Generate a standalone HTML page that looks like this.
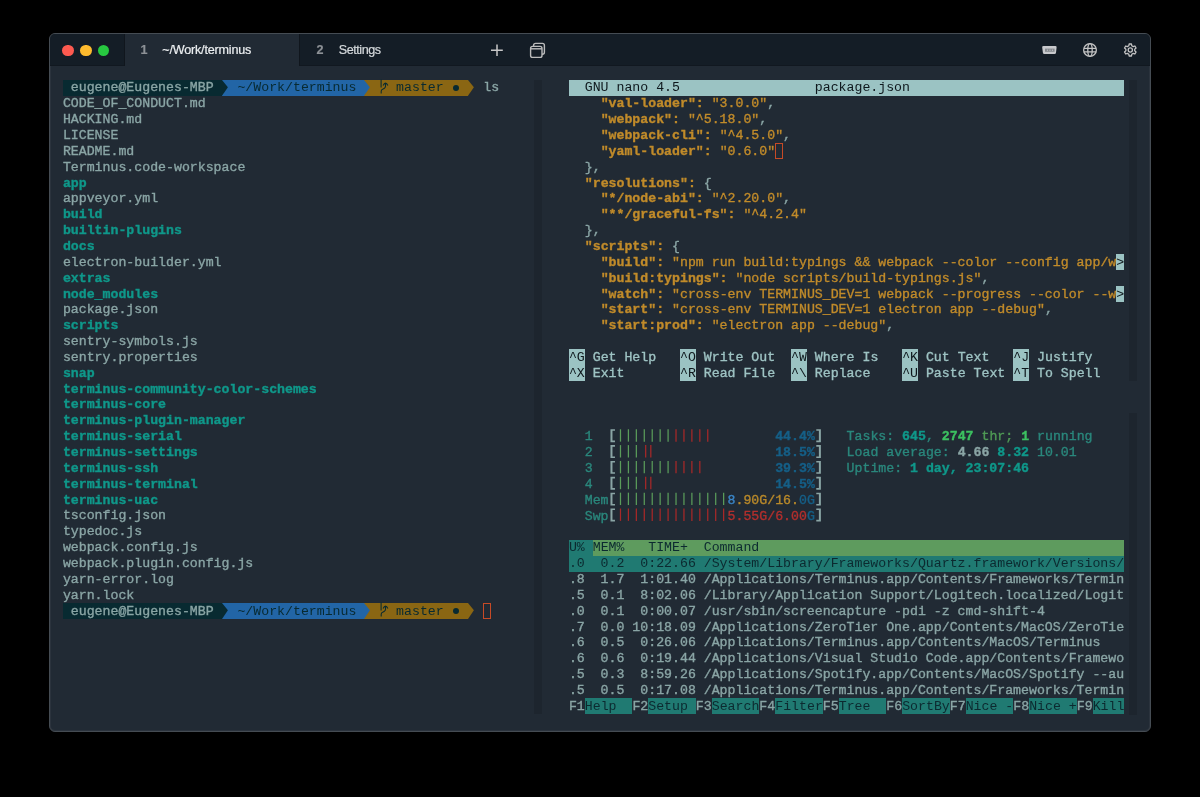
<!DOCTYPE html>
<html><head><meta charset="utf-8">
<style>
html,body{margin:0;padding:0;background:#000;width:1200px;height:797px;overflow:hidden;position:relative}
#all{position:absolute;left:0;top:0;width:1200px;height:797px;will-change:transform}
#win{position:absolute;left:49px;top:33px;width:1102px;height:699px;box-sizing:border-box;border:1px solid #454c53;border-radius:6px;background:#212a34;box-shadow:inset 1px 0 0 #2b333d,inset -1px 0 0 #2b333d,inset 0 -1px 0 #2b333d;overflow:hidden}
#tabbar{position:absolute;left:0;top:0;right:0;height:32.3px;background:#141d26;box-shadow:inset 0 -1px 0 #111820}
#tab1{position:absolute;left:74.7px;top:0;width:174.7px;height:32.5px;background:#212a34}
.tl{position:absolute;top:10.9px;width:11.6px;height:11.6px;border-radius:50%}
.tabt{position:absolute;font-family:"Liberation Sans",sans-serif;font-size:12.6px;line-height:16px;white-space:pre;letter-spacing:-0.45px;-webkit-text-stroke:0.2px currentColor}
.sb{position:absolute;width:7.6px;background:#1d252e}
.b{position:absolute;height:15.85px}
.r{position:absolute;-webkit-text-stroke:0.35px currentColor;height:15.85px;line-height:15.85px;font-family:"Liberation Mono",monospace;font-size:13.225px;white-space:pre}
.arr{position:absolute;width:6.9px;height:15.85px;clip-path:polygon(0 0,1px 0,100% 46%,1px 100%,0 100%)}
.dot{position:absolute;width:6.2px;height:6.2px;border-radius:50%}
.ic{position:absolute;overflow:visible}
.cur{position:absolute;width:7.935px;height:15.85px;box-sizing:border-box;border:1.3px solid #c64a26}
.bar{position:absolute;width:1.2px;height:12.4px}
</style></head><body><div id="all">
<div id="win">
  <div id="tabbar"></div>
  <div id="tab1"></div><div style="position:absolute;left:249.4px;top:0;width:1px;height:32.3px;background:#10161d"></div><div style="position:absolute;left:73.7px;top:0;width:1px;height:32.3px;background:#10161d"></div>
  <div class="tl" style="left:12.3px;background:#fd5a50"></div>
  <div class="tl" style="left:30.1px;background:#febb2e"></div>
  <div class="tl" style="left:47.8px;background:#27c840"></div>
</div>
<div class="tabt" style="left:140.5px;top:42px;color:#8d9196;font-weight:bold">1</div>
<div class="tabt" style="left:162.3px;top:42px;color:#eceff1;letter-spacing:-0.2px">~/Work/terminus</div>
<div class="tabt" style="left:316.5px;top:42px;color:#8d9196;font-weight:bold">2</div>
<div class="tabt" style="left:338.7px;top:42px;color:#d5d9dc">Settings</div>
<svg class="ic" style="left:0;top:0" width="1200" height="70">
  <path d="M491 50.2H502.8M497 44.6V56" stroke="#c8c8c8" stroke-width="1.5" fill="none"/>
  <rect x="533.6" y="43.4" width="10.8" height="10.8" rx="2" stroke="#bcbcbc" stroke-width="1.4" fill="#141d26"/>
  <rect x="530.6" y="46.4" width="11.4" height="11" rx="2" stroke="#bcbcbc" stroke-width="1.4" fill="#141d26"/>
  <path d="M530.6 48.8H542" stroke="#bcbcbc" stroke-width="1.4"/>
  <path d="M1043.5 46H1055.3Q1056.8 46 1056.6 47.4L1056 52.8Q1055.8 54 1054.6 54H1044.3Q1043.1 54 1042.9 52.8L1042.2 47.4Q1042 46 1043.5 46Z" fill="#c8c9cc"/><rect x="1045" y="48.6" width="9.6" height="3.2" fill="#85898e"/><g fill="#c8c9cc"><circle cx="1047.4" cy="50.2" r="0.6"/><circle cx="1050" cy="50.2" r="0.6"/><circle cx="1052.5" cy="50.2" r="0.6"/></g>
  <g stroke="#c4c4c4" stroke-width="1.3" fill="none"><circle cx="1090" cy="50" r="6.35"/><ellipse cx="1090" cy="50" rx="2.2" ry="6.4"/><path d="M1083.8 48.3H1096.2M1083.8 51.8H1096.2"/></g>
  <g stroke="#c4c4c4" stroke-width="1.3" fill="none"><path d="M1128.83 45.75 L1129.14 44.01 L1131.46 44.01 L1131.77 45.75 L1133.25 46.60 L1134.90 46.00 L1136.07 48.01 L1134.72 49.14 L1134.72 50.86 L1136.07 51.99 L1134.90 54.00 L1133.25 53.40 L1131.77 54.25 L1131.46 55.99 L1129.14 55.99 L1128.83 54.25 L1127.35 53.40 L1125.70 54.00 L1124.53 51.99 L1125.88 50.86 L1125.88 49.14 L1124.53 48.01 L1125.70 46.00 L1127.35 46.60Z" stroke-linejoin="round"/><circle cx="1130.3" cy="50" r="2.1"/></g>
</svg>
<div class="sb" style="left:534.4px;top:80px;height:634px"></div>
<div class="sb" style="left:1129.4px;top:80px;height:301px"></div>
<div class="sb" style="left:1129.4px;top:413px;height:301.5px"></div>
<div class="b" style="left:63px;top:80.00px;width:159px;background:#082a31"></div>
<div class="b" style="left:222px;top:80.00px;width:8px;background:#2265a6"></div>
<div class="b" style="left:230px;top:80.00px;width:134px;background:#2265a6"></div>
<div class="b" style="left:364px;top:80.00px;width:8px;background:#8a6613"></div>
<div class="b" style="left:372px;top:80.00px;width:80px;background:#8a6613"></div>
<div class="b" style="left:452px;top:80.00px;width:8px;background:#8a6613"></div>
<div class="b" style="left:460px;top:80.00px;width:8px;background:#8a6613"></div>
<div class="r" style="left:62.90px;top:80.45px"><span style="color:#8aa5a5"> eugene@Eugenes-MBP </span><span style="color:#8aa5a5"> </span><span style="color:#082a31;-webkit-text-stroke:0"> ~/Work/terminus </span><span style="color:#8aa5a5"> </span><span style="color:#082a31;-webkit-text-stroke:0">   master </span><span style="color:#082a31;-webkit-text-stroke:0"> </span><span style="color:#8aa5a5"> </span><span style="color:#8aa5a5"> </span><span style="color:#8aa5a5"> ls</span></div>
<div class="arr" style="left:221px;top:80.00px;background:#082a31"></div>
<div class="arr" style="left:363px;top:80.00px;background:#2265a6"></div>
<div class="b" style="left:467.58px;top:80.00px;width:7.93px;background:#212a34"></div>
<div class="arr" style="left:467px;top:80.00px;background:#8a6613"></div>
<svg class="ic" style="left:380.30px;top:80.00px" width="10" height="16" viewBox="0 0 10 16"><path d="M1.1 -0.5V7.6M1.2 13.6V11.2Q1.2 9.9 2.6 9.3L4.1 8.5Q5.5 7.8 5.5 6.3V3.4M3.1 5.4Q4.2 3.1 5.5 3.1Q6.8 3.1 7.9 5.4" fill="none" stroke="#082a31" stroke-width="1.05"/></svg>
<div class="dot" style="left:452.58px;top:84.60px;background:#082a31"></div>
<div class="r" style="left:62.90px;top:96.30px"><span style="color:#8aa5a5">CODE_OF_CONDUCT.md</span></div>
<div class="r" style="left:62.90px;top:112.15px"><span style="color:#8aa5a5">HACKING.md</span></div>
<div class="r" style="left:62.90px;top:128.00px"><span style="color:#8aa5a5">LICENSE</span></div>
<div class="r" style="left:62.90px;top:143.85px"><span style="color:#8aa5a5">README.md</span></div>
<div class="r" style="left:62.90px;top:159.70px"><span style="color:#8aa5a5">Terminus.code-workspace</span></div>
<div class="r" style="left:62.90px;top:175.55px"><span style="color:#0f988a;font-weight:bold">app</span></div>
<div class="r" style="left:62.90px;top:191.40px"><span style="color:#8aa5a5">appveyor.yml</span></div>
<div class="r" style="left:62.90px;top:207.25px"><span style="color:#0f988a;font-weight:bold">build</span></div>
<div class="r" style="left:62.90px;top:223.10px"><span style="color:#0f988a;font-weight:bold">builtin-plugins</span></div>
<div class="r" style="left:62.90px;top:238.95px"><span style="color:#0f988a;font-weight:bold">docs</span></div>
<div class="r" style="left:62.90px;top:254.80px"><span style="color:#8aa5a5">electron-builder.yml</span></div>
<div class="r" style="left:62.90px;top:270.65px"><span style="color:#0f988a;font-weight:bold">extras</span></div>
<div class="r" style="left:62.90px;top:286.50px"><span style="color:#0f988a;font-weight:bold">node_modules</span></div>
<div class="r" style="left:62.90px;top:302.35px"><span style="color:#8aa5a5">package.json</span></div>
<div class="r" style="left:62.90px;top:318.20px"><span style="color:#0f988a;font-weight:bold">scripts</span></div>
<div class="r" style="left:62.90px;top:334.05px"><span style="color:#8aa5a5">sentry-symbols.js</span></div>
<div class="r" style="left:62.90px;top:349.90px"><span style="color:#8aa5a5">sentry.properties</span></div>
<div class="r" style="left:62.90px;top:365.75px"><span style="color:#0f988a;font-weight:bold">snap</span></div>
<div class="r" style="left:62.90px;top:381.60px"><span style="color:#0f988a;font-weight:bold">terminus-community-color-schemes</span></div>
<div class="r" style="left:62.90px;top:397.45px"><span style="color:#0f988a;font-weight:bold">terminus-core</span></div>
<div class="r" style="left:62.90px;top:413.30px"><span style="color:#0f988a;font-weight:bold">terminus-plugin-manager</span></div>
<div class="r" style="left:62.90px;top:429.15px"><span style="color:#0f988a;font-weight:bold">terminus-serial</span></div>
<div class="r" style="left:62.90px;top:445.00px"><span style="color:#0f988a;font-weight:bold">terminus-settings</span></div>
<div class="r" style="left:62.90px;top:460.85px"><span style="color:#0f988a;font-weight:bold">terminus-ssh</span></div>
<div class="r" style="left:62.90px;top:476.70px"><span style="color:#0f988a;font-weight:bold">terminus-terminal</span></div>
<div class="r" style="left:62.90px;top:492.55px"><span style="color:#0f988a;font-weight:bold">terminus-uac</span></div>
<div class="r" style="left:62.90px;top:508.40px"><span style="color:#8aa5a5">tsconfig.json</span></div>
<div class="r" style="left:62.90px;top:524.25px"><span style="color:#8aa5a5">typedoc.js</span></div>
<div class="r" style="left:62.90px;top:540.10px"><span style="color:#8aa5a5">webpack.config.js</span></div>
<div class="r" style="left:62.90px;top:555.95px"><span style="color:#8aa5a5">webpack.plugin.config.js</span></div>
<div class="r" style="left:62.90px;top:571.80px"><span style="color:#8aa5a5">yarn-error.log</span></div>
<div class="r" style="left:62.90px;top:587.65px"><span style="color:#8aa5a5">yarn.lock</span></div>
<div class="b" style="left:63px;top:603.05px;width:159px;background:#082a31"></div>
<div class="b" style="left:222px;top:603.05px;width:8px;background:#2265a6"></div>
<div class="b" style="left:230px;top:603.05px;width:134px;background:#2265a6"></div>
<div class="b" style="left:364px;top:603.05px;width:8px;background:#8a6613"></div>
<div class="b" style="left:372px;top:603.05px;width:80px;background:#8a6613"></div>
<div class="b" style="left:452px;top:603.05px;width:8px;background:#8a6613"></div>
<div class="b" style="left:460px;top:603.05px;width:8px;background:#8a6613"></div>
<div class="r" style="left:62.90px;top:603.50px"><span style="color:#8aa5a5"> eugene@Eugenes-MBP </span><span style="color:#8aa5a5"> </span><span style="color:#082a31;-webkit-text-stroke:0"> ~/Work/terminus </span><span style="color:#8aa5a5"> </span><span style="color:#082a31;-webkit-text-stroke:0">   master </span><span style="color:#082a31;-webkit-text-stroke:0"> </span><span style="color:#8aa5a5"> </span><span style="color:#8aa5a5"> </span><span style="color:#8aa5a5"> </span></div>
<div class="arr" style="left:221px;top:603.05px;background:#082a31"></div>
<div class="arr" style="left:363px;top:603.05px;background:#2265a6"></div>
<div class="b" style="left:467.58px;top:603.05px;width:7.93px;background:#212a34"></div>
<div class="arr" style="left:467px;top:603.05px;background:#8a6613"></div>
<svg class="ic" style="left:380.30px;top:603.05px" width="10" height="16" viewBox="0 0 10 16"><path d="M1.1 -0.5V7.6M1.2 13.6V11.2Q1.2 9.9 2.6 9.3L4.1 8.5Q5.5 7.8 5.5 6.3V3.4M3.1 5.4Q4.2 3.1 5.5 3.1Q6.8 3.1 7.9 5.4" fill="none" stroke="#082a31" stroke-width="1.05"/></svg>
<div class="dot" style="left:452.58px;top:607.65px;background:#082a31"></div>
<div class="cur" style="left:483.06px;top:603.05px"></div>
<div class="b" style="left:569px;top:80.00px;width:555px;background:#9bc3c3"></div>
<div class="r" style="left:568.90px;top:80.45px"><span style="color:#0e171c;-webkit-text-stroke:0">  GNU nano 4.5                 package.json                           </span></div>
<div class="r" style="left:568.90px;top:96.30px"><span style="color:#8aa5a5">    </span><span style="color:#c18b2a;font-weight:bold">&quot;val-loader&quot;:</span><span style="color:#8aa5a5"> </span><span style="color:#c18b2a">&quot;3.0.0&quot;</span><span style="color:#8aa5a5">,</span></div>
<div class="r" style="left:568.90px;top:112.15px"><span style="color:#8aa5a5">    </span><span style="color:#c18b2a;font-weight:bold">&quot;webpack&quot;:</span><span style="color:#8aa5a5"> </span><span style="color:#c18b2a">&quot;^5.18.0&quot;</span><span style="color:#8aa5a5">,</span></div>
<div class="r" style="left:568.90px;top:128.00px"><span style="color:#8aa5a5">    </span><span style="color:#c18b2a;font-weight:bold">&quot;webpack-cli&quot;:</span><span style="color:#8aa5a5"> </span><span style="color:#c18b2a">&quot;^4.5.0&quot;</span><span style="color:#8aa5a5">,</span></div>
<div class="r" style="left:568.90px;top:143.85px"><span style="color:#8aa5a5">    </span><span style="color:#c18b2a;font-weight:bold">&quot;yaml-loader&quot;:</span><span style="color:#8aa5a5"> </span><span style="color:#c18b2a">&quot;0.6.0&quot;</span></div>
<div class="r" style="left:568.90px;top:159.70px"><span style="color:#8aa5a5">  },</span></div>
<div class="r" style="left:568.90px;top:175.55px"><span style="color:#8aa5a5">  </span><span style="color:#c18b2a;font-weight:bold">&quot;resolutions&quot;:</span><span style="color:#8aa5a5"> </span><span style="color:#8aa5a5">{</span></div>
<div class="r" style="left:568.90px;top:191.40px"><span style="color:#8aa5a5">    </span><span style="color:#c18b2a;font-weight:bold">&quot;*/node-abi&quot;:</span><span style="color:#8aa5a5"> </span><span style="color:#c18b2a">&quot;^2.20.0&quot;</span><span style="color:#8aa5a5">,</span></div>
<div class="r" style="left:568.90px;top:207.25px"><span style="color:#8aa5a5">    </span><span style="color:#c18b2a;font-weight:bold">&quot;**/graceful-fs&quot;:</span><span style="color:#8aa5a5"> </span><span style="color:#c18b2a">&quot;^4.2.4&quot;</span></div>
<div class="r" style="left:568.90px;top:223.10px"><span style="color:#8aa5a5">  },</span></div>
<div class="r" style="left:568.90px;top:238.95px"><span style="color:#8aa5a5">  </span><span style="color:#c18b2a;font-weight:bold">&quot;scripts&quot;:</span><span style="color:#8aa5a5"> </span><span style="color:#8aa5a5">{</span></div>
<div class="b" style="left:1116px;top:254.35px;width:8px;background:#9bc3c3"></div>
<div class="r" style="left:568.90px;top:254.80px"><span style="color:#8aa5a5">    </span><span style="color:#c18b2a;font-weight:bold">&quot;build&quot;:</span><span style="color:#8aa5a5"> </span><span style="color:#c18b2a">&quot;npm run build:typings &amp;&amp; webpack --color --config app/w</span><span style="color:#0e171c;-webkit-text-stroke:0">&gt;</span></div>
<div class="r" style="left:568.90px;top:270.65px"><span style="color:#8aa5a5">    </span><span style="color:#c18b2a;font-weight:bold">&quot;build:typings&quot;:</span><span style="color:#8aa5a5"> </span><span style="color:#c18b2a">&quot;node scripts/build-typings.js&quot;</span><span style="color:#8aa5a5">,</span></div>
<div class="b" style="left:1116px;top:286.05px;width:8px;background:#9bc3c3"></div>
<div class="r" style="left:568.90px;top:286.50px"><span style="color:#8aa5a5">    </span><span style="color:#c18b2a;font-weight:bold">&quot;watch&quot;:</span><span style="color:#8aa5a5"> </span><span style="color:#c18b2a">&quot;cross-env TERMINUS_DEV=1 webpack --progress --color --w</span><span style="color:#0e171c;-webkit-text-stroke:0">&gt;</span></div>
<div class="r" style="left:568.90px;top:302.35px"><span style="color:#8aa5a5">    </span><span style="color:#c18b2a;font-weight:bold">&quot;start&quot;:</span><span style="color:#8aa5a5"> </span><span style="color:#c18b2a">&quot;cross-env TERMINUS_DEV=1 electron app --debug&quot;</span><span style="color:#8aa5a5">,</span></div>
<div class="r" style="left:568.90px;top:318.20px"><span style="color:#8aa5a5">    </span><span style="color:#c18b2a;font-weight:bold">&quot;start:prod&quot;:</span><span style="color:#8aa5a5"> </span><span style="color:#c18b2a">&quot;electron app --debug&quot;</span><span style="color:#8aa5a5">,</span></div>
<div class="cur" style="left:774.81px;top:143.40px"></div>
<div class="b" style="left:569px;top:349.45px;width:16px;background:#9bc3c3"></div>
<div class="b" style="left:680px;top:349.45px;width:16px;background:#9bc3c3"></div>
<div class="b" style="left:791px;top:349.45px;width:16px;background:#9bc3c3"></div>
<div class="b" style="left:902px;top:349.45px;width:16px;background:#9bc3c3"></div>
<div class="b" style="left:1013px;top:349.45px;width:16px;background:#9bc3c3"></div>
<div class="r" style="left:568.90px;top:349.90px"><span style="color:#0e171c;-webkit-text-stroke:0">^G</span><span style="color:#9ec3c3"> Get Help   </span><span style="color:#0e171c;-webkit-text-stroke:0">^O</span><span style="color:#9ec3c3"> Write Out  </span><span style="color:#0e171c;-webkit-text-stroke:0">^W</span><span style="color:#9ec3c3"> Where Is   </span><span style="color:#0e171c;-webkit-text-stroke:0">^K</span><span style="color:#9ec3c3"> Cut Text   </span><span style="color:#0e171c;-webkit-text-stroke:0">^J</span><span style="color:#9ec3c3"> Justify    </span></div>
<div class="b" style="left:569px;top:365.30px;width:16px;background:#9bc3c3"></div>
<div class="b" style="left:680px;top:365.30px;width:16px;background:#9bc3c3"></div>
<div class="b" style="left:791px;top:365.30px;width:16px;background:#9bc3c3"></div>
<div class="b" style="left:902px;top:365.30px;width:16px;background:#9bc3c3"></div>
<div class="b" style="left:1013px;top:365.30px;width:16px;background:#9bc3c3"></div>
<div class="r" style="left:568.90px;top:365.75px"><span style="color:#0e171c;-webkit-text-stroke:0">^X</span><span style="color:#9ec3c3"> Exit       </span><span style="color:#0e171c;-webkit-text-stroke:0">^R</span><span style="color:#9ec3c3"> Read File  </span><span style="color:#0e171c;-webkit-text-stroke:0">^\</span><span style="color:#9ec3c3"> Replace    </span><span style="color:#0e171c;-webkit-text-stroke:0">^U</span><span style="color:#9ec3c3"> Paste Text </span><span style="color:#0e171c;-webkit-text-stroke:0">^T</span><span style="color:#9ec3c3"> To Spell   </span></div>
<div class="r" style="left:568.90px;top:429.40px"><span style="color:#2a877c">  1  </span><span style="color:#8aa5a5"> </span><span style="color:#8aa5a5">                    </span><span style="color:#155f87;font-weight:bold">44.4%</span><span style="color:#8aa5a5"> </span><span style="color:#8aa5a5">   </span><span style="color:#2a877c">Tasks: </span><span style="color:#0f988a;font-weight:bold">645</span><span style="color:#2a877c">, </span><span style="color:#3cc060;font-weight:bold">2747</span><span style="color:#4f9a55"> thr; </span><span style="color:#3cc060;font-weight:bold">1</span><span style="color:#2a877c"> running</span></div>
<div class="r" style="left:568.90px;top:445.25px"><span style="color:#2a877c">  2  </span><span style="color:#8aa5a5"> </span><span style="color:#8aa5a5">                    </span><span style="color:#155f87;font-weight:bold">18.5%</span><span style="color:#8aa5a5"> </span><span style="color:#8aa5a5">   </span><span style="color:#2a877c">Load average: </span><span style="color:#8aa5a5;font-weight:bold">4.66 </span><span style="color:#0f988a;font-weight:bold">8.32 </span><span style="color:#2a877c">10.01</span></div>
<div class="r" style="left:568.90px;top:461.10px"><span style="color:#2a877c">  3  </span><span style="color:#8aa5a5"> </span><span style="color:#8aa5a5">                    </span><span style="color:#155f87;font-weight:bold">39.3%</span><span style="color:#8aa5a5"> </span><span style="color:#8aa5a5">   </span><span style="color:#2a877c">Uptime: </span><span style="color:#0f988a;font-weight:bold">1 day, 23:07:46</span></div>
<div class="r" style="left:568.90px;top:476.95px"><span style="color:#2a877c">  4  </span><span style="color:#8aa5a5"> </span><span style="color:#8aa5a5">                    </span><span style="color:#155f87;font-weight:bold">14.5%</span><span style="color:#8aa5a5"> </span></div>
<div class="r" style="left:568.90px;top:492.80px"><span style="color:#2a877c">  Mem</span><span style="color:#8aa5a5"> </span><span style="color:#8aa5a5">              </span><span style="color:#3a86c8">8</span><span style="color:#b8892a">.90G/16.</span><span style="color:#155f87">0G</span><span style="color:#8aa5a5"> </span></div>
<div class="r" style="left:568.90px;top:508.65px"><span style="color:#2a877c">  Swp</span><span style="color:#8aa5a5"> </span><span style="color:#8aa5a5">              </span><span style="color:#b22f2d">5.55G/6.00</span><span style="color:#155f87">G</span><span style="color:#8aa5a5"> </span></div>
<svg class="ic" style="left:0;top:0" width="1200" height="797"><g stroke-width="1.25"><path d="M620.48 429.25V441.65" stroke="#5a9c5a"/><path d="M628.41 429.25V441.65" stroke="#5a9c5a"/><path d="M636.35 429.25V441.65" stroke="#5a9c5a"/><path d="M644.28 429.25V441.65" stroke="#5a9c5a"/><path d="M652.22 429.25V441.65" stroke="#5a9c5a"/><path d="M660.15 429.25V441.65" stroke="#5a9c5a"/><path d="M668.09 429.25V441.65" stroke="#5a9c5a"/><path d="M676.02 429.25V441.65" stroke="#a82828"/><path d="M683.96 429.25V441.65" stroke="#a82828"/><path d="M691.89 429.25V441.65" stroke="#a82828"/><path d="M699.83 429.25V441.65" stroke="#a82828"/><path d="M707.76 429.25V441.65" stroke="#a82828"/><path d="M620.48 445.10V457.50" stroke="#5a9c5a"/><path d="M628.41 445.10V457.50" stroke="#5a9c5a"/><path d="M636.35 445.10V457.50" stroke="#5a9c5a"/><path d="M645.68 445.10V457.50" stroke="#a82828"/><path d="M650.82 445.10V457.50" stroke="#a82828"/><path d="M620.48 460.95V473.35" stroke="#5a9c5a"/><path d="M628.41 460.95V473.35" stroke="#5a9c5a"/><path d="M636.35 460.95V473.35" stroke="#5a9c5a"/><path d="M644.28 460.95V473.35" stroke="#5a9c5a"/><path d="M652.22 460.95V473.35" stroke="#5a9c5a"/><path d="M660.15 460.95V473.35" stroke="#5a9c5a"/><path d="M668.09 460.95V473.35" stroke="#5a9c5a"/><path d="M676.02 460.95V473.35" stroke="#a82828"/><path d="M683.96 460.95V473.35" stroke="#a82828"/><path d="M691.89 460.95V473.35" stroke="#a82828"/><path d="M699.83 460.95V473.35" stroke="#a82828"/><path d="M620.48 476.80V489.20" stroke="#5a9c5a"/><path d="M628.41 476.80V489.20" stroke="#5a9c5a"/><path d="M636.35 476.80V489.20" stroke="#5a9c5a"/><path d="M645.68 476.80V489.20" stroke="#a82828"/><path d="M650.82 476.80V489.20" stroke="#a82828"/><path d="M620.48 492.65V505.05" stroke="#5a9c5a"/><path d="M628.41 492.65V505.05" stroke="#5a9c5a"/><path d="M636.35 492.65V505.05" stroke="#5a9c5a"/><path d="M644.28 492.65V505.05" stroke="#5a9c5a"/><path d="M652.22 492.65V505.05" stroke="#5a9c5a"/><path d="M660.15 492.65V505.05" stroke="#5a9c5a"/><path d="M668.09 492.65V505.05" stroke="#5a9c5a"/><path d="M676.02 492.65V505.05" stroke="#5a9c5a"/><path d="M683.96 492.65V505.05" stroke="#5a9c5a"/><path d="M691.89 492.65V505.05" stroke="#5a9c5a"/><path d="M699.83 492.65V505.05" stroke="#5a9c5a"/><path d="M707.76 492.65V505.05" stroke="#5a9c5a"/><path d="M715.70 492.65V505.05" stroke="#5a9c5a"/><path d="M723.63 492.65V505.05" stroke="#5a9c5a"/><path d="M620.48 508.50V520.90" stroke="#a82828"/><path d="M628.41 508.50V520.90" stroke="#a82828"/><path d="M636.35 508.50V520.90" stroke="#a82828"/><path d="M644.28 508.50V520.90" stroke="#a82828"/><path d="M652.22 508.50V520.90" stroke="#a82828"/><path d="M660.15 508.50V520.90" stroke="#a82828"/><path d="M668.09 508.50V520.90" stroke="#a82828"/><path d="M676.02 508.50V520.90" stroke="#a82828"/><path d="M683.96 508.50V520.90" stroke="#a82828"/><path d="M691.89 508.50V520.90" stroke="#a82828"/><path d="M699.83 508.50V520.90" stroke="#a82828"/><path d="M707.76 508.50V520.90" stroke="#a82828"/><path d="M715.70 508.50V520.90" stroke="#a82828"/><path d="M723.63 508.50V520.90" stroke="#a82828"/><path d="M614.97 429.25H610.47V442.15H614.97V440.55H612.47V430.85H614.97ZM816.28 429.25H820.88V442.15H816.28V440.55H818.88V430.85H816.28ZM614.97 445.10H610.47V458.00H614.97V456.40H612.47V446.70H614.97ZM816.28 445.10H820.88V458.00H816.28V456.40H818.88V446.70H816.28ZM614.97 460.95H610.47V473.85H614.97V472.25H612.47V462.55H614.97ZM816.28 460.95H820.88V473.85H816.28V472.25H818.88V462.55H816.28ZM614.97 476.80H610.47V489.70H614.97V488.10H612.47V478.40H614.97ZM816.28 476.80H820.88V489.70H816.28V488.10H818.88V478.40H816.28ZM614.97 492.65H610.47V505.55H614.97V503.95H612.47V494.25H614.97ZM816.28 492.65H820.88V505.55H816.28V503.95H818.88V494.25H816.28ZM614.97 508.50H610.47V521.40H614.97V519.80H612.47V510.10H614.97ZM816.28 508.50H820.88V521.40H816.28V519.80H818.88V510.10H816.28Z" fill="#8aa5a5" stroke="none"/></g></svg>
<div class="b" style="left:569px;top:539.90px;width:24px;background:#207a72"></div>
<div class="b" style="left:593px;top:539.90px;width:531px;background:#5e9b5e"></div>
<div class="r" style="left:568.90px;top:540.35px"><span style="color:#0c2a30;-webkit-text-stroke:0">U% </span><span style="color:#0c2a30;-webkit-text-stroke:0">MEM%   TIME+  Command                                              </span></div>
<div class="b" style="left:569px;top:555.75px;width:555px;background:#207a72"></div>
<div class="r" style="left:568.90px;top:556.20px"><span style="color:#0c2a30;-webkit-text-stroke:0">.0  0.2  0:22.66 /System/Library/Frameworks/Quartz.framework/Versions/</span></div>
<div class="r" style="left:568.90px;top:572.05px"><span style="color:#8aa5a5">.8  1.7  1:01.40 /Applications/Terminus.app/Contents/Frameworks/Termin</span></div>
<div class="r" style="left:568.90px;top:587.90px"><span style="color:#8aa5a5">.5  0.1  8:02.06 /Library/Application Support/Logitech.localized/Logit</span></div>
<div class="r" style="left:568.90px;top:603.75px"><span style="color:#8aa5a5">.0  0.1  0:00.07 /usr/sbin/screencapture -pdi -z cmd-shift-4          </span></div>
<div class="r" style="left:568.90px;top:619.60px"><span style="color:#8aa5a5">.7  0.0 10:18.09 /Applications/ZeroTier One.app/Contents/MacOS/ZeroTie</span></div>
<div class="r" style="left:568.90px;top:635.45px"><span style="color:#8aa5a5">.6  0.5  0:26.06 /Applications/Terminus.app/Contents/MacOS/Terminus   </span></div>
<div class="r" style="left:568.90px;top:651.30px"><span style="color:#8aa5a5">.6  0.6  0:19.44 /Applications/Visual Studio Code.app/Contents/Framewo</span></div>
<div class="r" style="left:568.90px;top:667.15px"><span style="color:#8aa5a5">.5  0.3  8:59.26 /Applications/Spotify.app/Contents/MacOS/Spotify --au</span></div>
<div class="r" style="left:568.90px;top:683.00px"><span style="color:#8aa5a5">.5  0.5  0:17.08 /Applications/Terminus.app/Contents/Frameworks/Termin</span></div>
<div class="b" style="left:585px;top:698.40px;width:47px;background:#207a72"></div>
<div class="b" style="left:648px;top:698.40px;width:48px;background:#207a72"></div>
<div class="b" style="left:712px;top:698.40px;width:47px;background:#207a72"></div>
<div class="b" style="left:775px;top:698.40px;width:48px;background:#207a72"></div>
<div class="b" style="left:839px;top:698.40px;width:47px;background:#207a72"></div>
<div class="b" style="left:902px;top:698.40px;width:48px;background:#207a72"></div>
<div class="b" style="left:966px;top:698.40px;width:47px;background:#207a72"></div>
<div class="b" style="left:1029px;top:698.40px;width:48px;background:#207a72"></div>
<div class="b" style="left:1093px;top:698.40px;width:31px;background:#207a72"></div>
<div class="r" style="left:568.90px;top:698.85px"><span style="color:#8aa5a5">F1</span><span style="color:#0c2a30;-webkit-text-stroke:0">Help  </span><span style="color:#8aa5a5">F2</span><span style="color:#0c2a30;-webkit-text-stroke:0">Setup </span><span style="color:#8aa5a5">F3</span><span style="color:#0c2a30;-webkit-text-stroke:0">Search</span><span style="color:#8aa5a5">F4</span><span style="color:#0c2a30;-webkit-text-stroke:0">Filter</span><span style="color:#8aa5a5">F5</span><span style="color:#0c2a30;-webkit-text-stroke:0">Tree  </span><span style="color:#8aa5a5">F6</span><span style="color:#0c2a30;-webkit-text-stroke:0">SortBy</span><span style="color:#8aa5a5">F7</span><span style="color:#0c2a30;-webkit-text-stroke:0">Nice -</span><span style="color:#8aa5a5">F8</span><span style="color:#0c2a30;-webkit-text-stroke:0">Nice +</span><span style="color:#8aa5a5">F9</span><span style="color:#0c2a30;-webkit-text-stroke:0">Kill</span></div>
</div></body></html>
